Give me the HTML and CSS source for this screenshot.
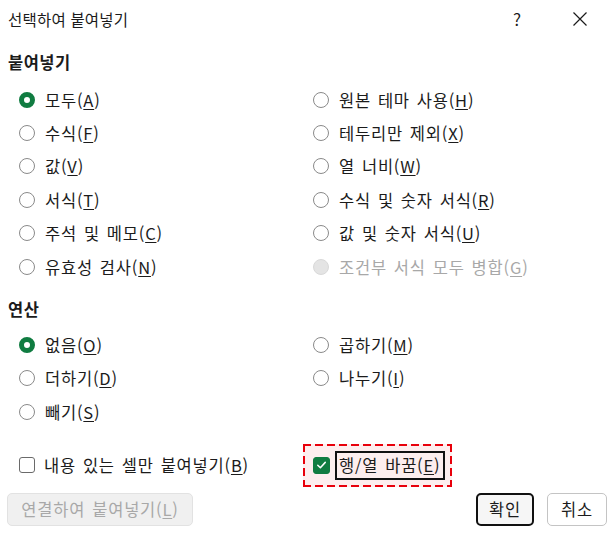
FILE: index.html
```html
<!DOCTYPE html>
<html lang="ko">
<head>
<meta charset="utf-8">
<link rel="stylesheet" href="styles.css">
</head>
<body>
<div class="dialog">
  <div class="titlebar">
    <span class="title">선택하여 붙여넣기</span>
    <span class="help">?</span>
    <span class="close"><svg width="16" height="16" viewBox="0 0 16 16"><path d="M1.5 1.5 L14.5 14.5 M14.5 1.5 L1.5 14.5" stroke="#1b1b1b" stroke-width="1.2" fill="none"/></svg></span>
  </div>

  <div class="section-title">붙여넣기</div>
  <div class="grid paste">
    <label class="opt"><span class="radio on"></span>모두(<u>A</u>)</label>
    <label class="opt"><span class="radio"></span>원본 테마 사용(<u>H</u>)</label>
    <label class="opt"><span class="radio"></span>수식(<u>F</u>)</label>
    <label class="opt"><span class="radio"></span>테두리만 제외(<u>X</u>)</label>
    <label class="opt"><span class="radio"></span>값(<u>V</u>)</label>
    <label class="opt"><span class="radio"></span>열 너비(<u>W</u>)</label>
    <label class="opt"><span class="radio"></span>서식(<u>T</u>)</label>
    <label class="opt"><span class="radio"></span>수식 및 숫자 서식(<u>R</u>)</label>
    <label class="opt"><span class="radio"></span>주석 및 메모(<u>C</u>)</label>
    <label class="opt"><span class="radio"></span>값 및 숫자 서식(<u>U</u>)</label>
    <label class="opt"><span class="radio"></span>유효성 검사(<u>N</u>)</label>
    <label class="opt disabled"><span class="radio"></span>조건부 서식 모두 병합(<u>G</u>)</label>
  </div>

  <div class="section-title ops-title">연산</div>
  <div class="grid ops">
    <label class="opt"><span class="radio on"></span>없음(<u>O</u>)</label>
    <label class="opt"><span class="radio"></span>곱하기(<u>M</u>)</label>
    <label class="opt"><span class="radio"></span>더하기(<u>D</u>)</label>
    <label class="opt"><span class="radio"></span>나누기(<u>I</u>)</label>
    <label class="opt"><span class="radio"></span>빼기(<u>S</u>)</label>
  </div>

  <div class="checks">
    <label class="chk-left"><span class="box"></span>내용 있는 셀만 붙여넣기(<u>B</u>)</label>
    <div class="highlight">
      <span class="box checked"><svg width="16" height="16" viewBox="0 0 16 16"><path d="M4 8.2 L6.8 11 L12 5.2" stroke="#fff" stroke-width="1.6" fill="none" stroke-linecap="round" stroke-linejoin="round"/></svg></span>
      <span class="focus">행/열 바꿈(<u>E</u>)</span>
    </div>
  </div>

  <div class="buttons">
    <button class="btn disabled-btn">연결하여 붙여넣기(<u>L</u>)</button>
    <span class="spacer"></span>
    <button class="btn default">확인</button>
    <button class="btn">취소</button>
  </div>
</div>
</body>
</html>
```

FILE: styles.css
```css
* { box-sizing: border-box; }
html, body { margin: 0; padding: 0; background: #ffffff; }
body {
  width: 615px;
  height: 540px;
  overflow: hidden;
  font-family: "Noto Sans CJK KR", "Noto Sans", sans-serif;
  color: #1b1b1b;
}
.dialog {
  width: 615px;
  height: 540px;
  padding: 0 8px 0 8px;
}
.titlebar {
  height: 40px;
  display: flex;
  align-items: center;
}
.title {
  font-size: 15.5px;
  line-height: 20px;
  letter-spacing: 0.2px;
  flex: 1;
  padding-bottom: 2px;
}
.help {
  font-size: 17px;
  line-height: 20px;
  width: 12px;
  margin-right: 47px;
  padding-bottom: 2px;
}
.close {
  display: flex;
  width: 16px;
  height: 16px;
  margin-right: 19px;
  margin-bottom: 2px;
}
.section-title {
  margin-top: 10px;
  font-size: 16.5px;
  font-weight: 700;
  line-height: 24px;
  letter-spacing: 0.5px;
}
.ops-title { margin-top: 14px; }
.grid {
  display: grid;
  grid-template-columns: 294px 1fr;
  grid-auto-rows: 33.4px;
  padding-left: 11px;
}
.paste { margin-top: 9px; }
.ops { margin-top: 7px; }
.opt, .chk-left, .focus, .btn {
  font-size: 16.5px;
  letter-spacing: 0.8px;
  word-spacing: 1.5px;
}
.opt {
  display: flex;
  align-items: center;
  line-height: 22px;
}
.opt u, .chk-left u, .focus u, .btn u { text-underline-offset: 2px; text-decoration-thickness: 1px; }
.radio {
  width: 16px;
  height: 16px;
  border-radius: 50%;
  border: 1px solid #8a8a8a;
  background: #fff;
  margin-right: 10px;
  flex: none;
}
.radio.on {
  border: 5px solid #107c41;
}
.disabled { color: #a8a8a8; }
.disabled .radio {
  background: #e4e4e4;
  border-color: #d9d9d9;
}
.checks {
  margin-top: 15px;
  display: flex;
  align-items: center;
  padding-left: 11px;
  height: 43px;
}
.chk-left {
  width: 284px;
  display: flex;
  align-items: center;
  line-height: 22px;
}
.box {
  width: 16px;
  height: 16px;
  border: 1px solid #6a6a6a;
  border-radius: 3px;
  margin-right: 9px;
  flex: none;
  display: flex;
  align-items: center;
  justify-content: center;
}
.box.checked {
  background: #107c41;
  border-color: #107c41;
  width: 17px;
  height: 17px;
  margin-right: 5px;
}
.highlight {
  height: 43px;
  width: 149px;
  display: flex;
  align-items: center;
  padding: 0 4px 0 10px;
  background:
    repeating-linear-gradient(90deg, #e8000b 0 8px, transparent 8px 12px) left top / 100% 2px no-repeat,
    repeating-linear-gradient(90deg, #e8000b 0 8px, transparent 8px 12px) left bottom / 100% 2px no-repeat,
    repeating-linear-gradient(180deg, #e8000b 0 8px, transparent 8px 12px) left top / 2px 100% no-repeat,
    repeating-linear-gradient(180deg, #e8000b 0 8px, transparent 8px 12px) right top / 2px 100% no-repeat,
    #fdeeee;
}
.focus {
  border: 2px solid #111;
  line-height: 25px;
  padding: 0 3px 0 2px;
  white-space: nowrap;
}
.buttons {
  margin-top: 6px;
  display: flex;
  align-items: center;
  margin-left: -1px;
}
.spacer { flex: 1; }
.btn {
  font-family: inherit;
  line-height: 22px;
  height: 33px;
  border-radius: 5px;
  border: 1px solid #c4c4c4;
  background: #fff;
  color: #1b1b1b;
  padding: 0;
  width: 60px;
}
.btn.default {
  border: 2px solid #111;
  background: #f6f6f6;
  width: 58px;
  margin-right: 13px;
}
.btn.disabled-btn {
  width: 186px;
  background: #f0f0f0;
  border-color: #e2e2e2;
  color: #a8a8a8;
}
```
